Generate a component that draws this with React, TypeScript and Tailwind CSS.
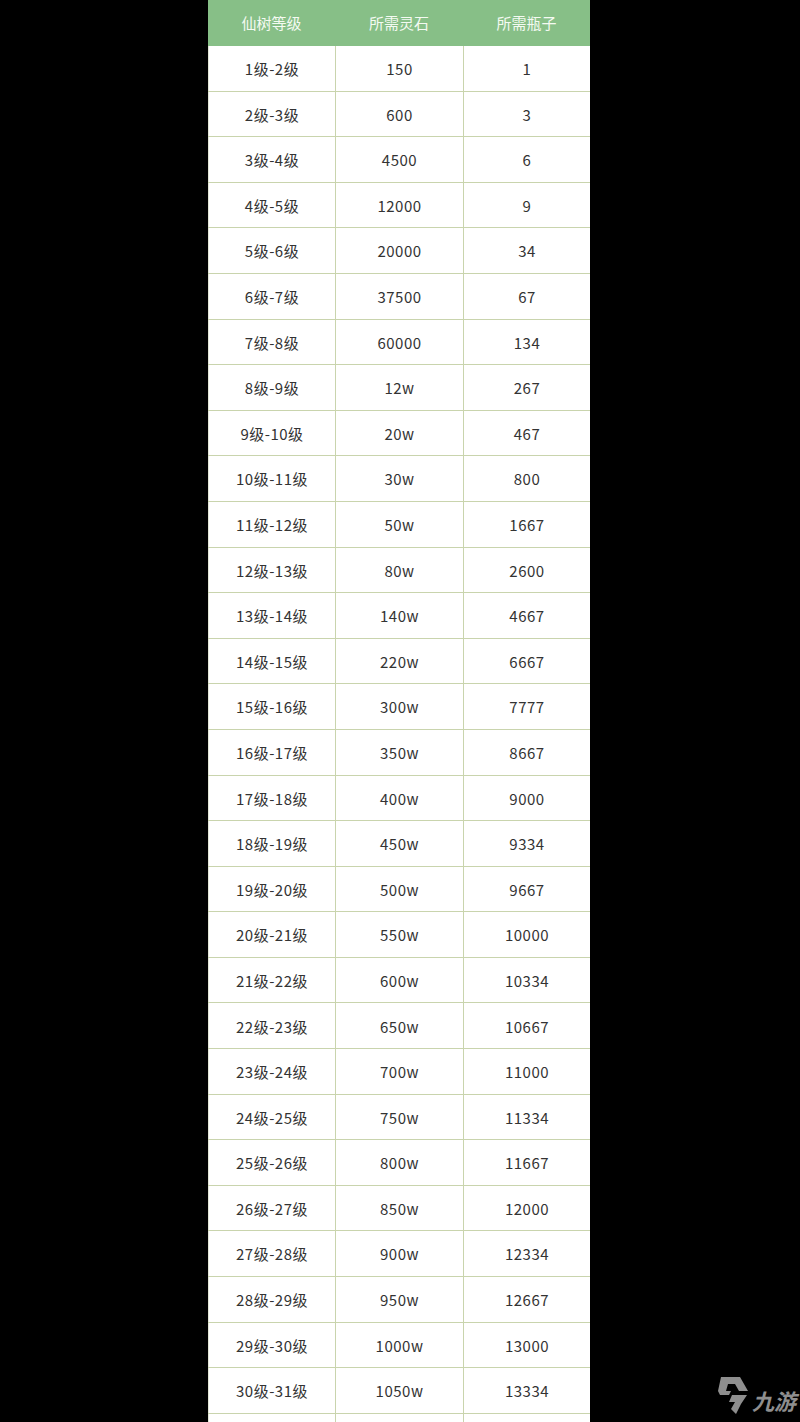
const rows: [string, string, string][] = [
  ["1级-2级", "150", "1"],
  ["2级-3级", "600", "3"],
  ["3级-4级", "4500", "6"],
  ["4级-5级", "12000", "9"],
  ["5级-6级", "20000", "34"],
  ["6级-7级", "37500", "67"],
  ["7级-8级", "60000", "134"],
  ["8级-9级", "12w", "267"],
  ["9级-10级", "20w", "467"],
  ["10级-11级", "30w", "800"],
  ["11级-12级", "50w", "1667"],
  ["12级-13级", "80w", "2600"],
  ["13级-14级", "140w", "4667"],
  ["14级-15级", "220w", "6667"],
  ["15级-16级", "300w", "7777"],
  ["16级-17级", "350w", "8667"],
  ["17级-18级", "400w", "9000"],
  ["18级-19级", "450w", "9334"],
  ["19级-20级", "500w", "9667"],
  ["20级-21级", "550w", "10000"],
  ["21级-22级", "600w", "10334"],
  ["22级-23级", "650w", "10667"],
  ["23级-24级", "700w", "11000"],
  ["24级-25级", "750w", "11334"],
  ["25级-26级", "800w", "11667"],
  ["26级-27级", "850w", "12000"],
  ["27级-28级", "900w", "12334"],
  ["28级-29级", "950w", "12667"],
  ["29级-30级", "1000w", "13000"],
  ["30级-31级", "1050w", "13334"],
  ["", "", ""],
];

// 九游 watermark, bottom right
function Logo() {
  return (
    <div className="absolute bottom-[8px] right-[4px] flex items-end gap-[4px] text-[#8e8e8e]">
      <svg width="30" height="38" viewBox="0 0 30 38" fill="currentColor">
        <path d="M3 1 L22 1 L30 15 L21 15 L17 8 L10 8 L8 15 L13 15 L11 19 L2 19 L0 15 Z" />
        <path d="M14 19 L29 19 L23 28 L18 38 L13 33 L17 26 L11 26 Z" />
      </svg>
      <span
        className="mb-[3px] text-[22px] font-bold italic leading-none"
        style={{ fontFamily: '"Noto Sans CJK SC", sans-serif' }}
      >
        九游
      </span>
    </div>
  );
}

export default function App() {
  return (
    <div
      className="relative h-[1422px] w-[800px] overflow-hidden bg-black"
      style={{ fontFamily: '"Noto Sans CJK SC", sans-serif' }}
    >
      <div className="ml-[208px] w-[382px] bg-white">
        <div className="grid h-[46px] grid-cols-[127px_128px_127px] bg-[#87bf87] text-[15px] text-[#f4faf2]">
          <div className="flex items-center justify-center">仙树等级</div>
          <div className="flex items-center justify-center">所需灵石</div>
          <div className="flex items-center justify-center">所需瓶子</div>
        </div>
        {rows.map((r, i) => (
          <div
            key={i}
            className="grid h-[45.6px] grid-cols-[127px_128px_127px] border-b border-[#c9d4ad] text-[15px] tracking-[0.5px] text-[#333]"
          >
            <div className="flex items-center justify-center border-l border-[#e2e6d6] pt-[2px]">
              {r[0]}
            </div>
            <div className="flex items-center justify-center border-l border-[#c9d4ad] pt-[2px]">
              {r[1]}
            </div>
            <div className="flex items-center justify-center border-l border-[#c9d4ad] pt-[2px]">
              {r[2]}
            </div>
          </div>
        ))}
      </div>
      <Logo />
    </div>
  );
}
